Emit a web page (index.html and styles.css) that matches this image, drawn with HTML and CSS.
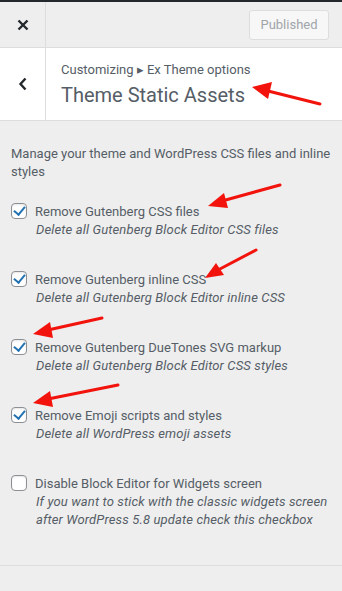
FILE: index.html
```html
<!DOCTYPE html>
<html lang="en">
<head>
  <meta charset="UTF-8">
  <meta name="viewport" content="width=device-width, initial-scale=1.0">
  <title>Theme Static Assets</title>
  <link rel="stylesheet" href="styles.css">
</head>
<body>
  <div id="header">
    <div class="close">
      <svg width="12" height="12" viewBox="0 0 12 12"><path d="M1.5 1.5 L10.5 10.5 M10.5 1.5 L1.5 10.5" stroke="#23282d" stroke-width="2.4" fill="none"/></svg>
    </div>
    <div class="spacer"></div>
    <button class="published" disabled>Published</button>
  </div>

  <div id="section-title">
    <div class="back">
      <svg width="10" height="14" viewBox="0 0 10 14"><path d="M7.5 1.5 L2.5 7 L7.5 12.5" stroke="#23282d" stroke-width="2.4" fill="none"/></svg>
    </div>
    <div class="titles">
      <div class="crumb">Customizing &#9656; Ex Theme options</div>
      <div class="title">Theme Static Assets</div>
    </div>
  </div>

  <div id="content">
    <p class="intro">Manage your theme and WordPress CSS files and inline styles</p>
    <ul class="options">
      <li>
        <div class="row"><span class="box checked"></span><span class="label">Remove Gutenberg CSS files</span></div>
        <div class="desc">Delete all Gutenberg Block Editor CSS files</div>
      </li>
      <li>
        <div class="row"><span class="box checked"></span><span class="label">Remove Gutenberg inline CSS</span></div>
        <div class="desc">Delete all Gutenberg Block Editor inline CSS</div>
      </li>
      <li>
        <div class="row"><span class="box checked"></span><span class="label">Remove Gutenberg DueTones SVG markup</span></div>
        <div class="desc">Delete all Gutenberg Block Editor CSS styles</div>
      </li>
      <li>
        <div class="row"><span class="box checked"></span><span class="label">Remove Emoji scripts and styles</span></div>
        <div class="desc">Delete all WordPress emoji assets</div>
      </li>
      <li>
        <div class="row"><span class="box"></span><span class="label">Disable Block Editor for Widgets screen</span></div>
        <div class="desc">If you want to stick with the classic widgets screen after WordPress 5.8 update check this checkbox</div>
      </li>
    </ul>
  </div>
  <div id="footer"></div>

  <svg class="arrows" width="342" height="591" viewBox="0 0 342 591">
    <g stroke="#f2140c" stroke-width="3" fill="#f2140c" stroke-linecap="round">
      <line x1="320" y1="102" x2="268" y2="89"/>
      <polygon points="252,85 272,80 268,97" stroke="none"/>
      <line x1="280" y1="183" x2="222" y2="199"/>
      <polygon points="208,204 224,191 228,206" stroke="none"/>
      <line x1="256" y1="248" x2="218" y2="268"/>
      <polygon points="205,276 216,261 224,273" stroke="none"/>
      <line x1="102" y1="316" x2="48" y2="328"/>
      <polygon points="33,332 50,320 53,336" stroke="none"/>
      <line x1="118" y1="383" x2="48" y2="397"/>
      <polygon points="33,401 50,389 53,405" stroke="none"/>
    </g>
  </svg>
</body>
</html>
```

FILE: styles.css
```css
body {
  margin: 0;
  width: 342px;
  height: 591px;
  overflow: hidden;
  background: #eeeeee;
  font-family: Roboto, "Liberation Sans", sans-serif;
  font-size: 13px;
  color: #555d66;
  position: relative;
  border-top: 2px solid #23282d;
  box-sizing: border-box;
}
#header {
  display: flex;
  align-items: center;
  height: 45px;
  background: #eeeeee;
  border-bottom: 1px solid #dddddd;
}
.close, .back {
  width: 45px;
  height: 100%;
  border-right: 1px solid #dddddd;
  display: flex;
  align-items: center;
  justify-content: center;
}
.spacer {
  flex: 1;
}
.published {
  margin-right: 13px;
  height: 30px;
  width: 80px;
  border: 1px solid #dddddd;
  border-radius: 3px;
  background: #f7f7f7;
  color: #a0a5aa;
  font-family: inherit;
  font-size: 13px;
  padding: 0;
}
#section-title {
  display: flex;
  height: 72px;
  background: #ffffff;
  border-bottom: 1px solid #dddddd;
}
.back {
  height: auto;
}
.titles {
  padding: 13px 0 0 15px;
}
.crumb {
  font-size: 13px;
  line-height: 18px;
}
.title {
  font-size: 20px;
  line-height: 28px;
  margin-top: 2px;
}
#content {
  padding: 24px 6px 0 11px;
  height: 445px;
  box-sizing: border-box;
  border-bottom: 1px solid #dddddd;
}
.intro {
  margin: 0 0 21px;
  line-height: 18px;
}
.options {
  list-style: none;
  margin: 0;
  padding: 0;
}
.options li {
  margin-bottom: 31px;
}
.row {
  display: flex;
  align-items: center;
  height: 18px;
}
.box {
  width: 16px;
  height: 16px;
  box-sizing: border-box;
  border: 1px solid #8c8f94;
  border-radius: 4px;
  background: #ffffff;
  margin-right: 8px;
  position: relative;
  box-shadow: inset 0 1px 2px rgba(0, 0, 0, 0.1);
}
.box.checked::after {
  content: "";
  position: absolute;
  left: 4px;
  top: 0px;
  width: 5px;
  height: 9px;
  border: solid #2271b1;
  border-width: 0 2.5px 2.5px 0;
  transform: rotate(40deg);
}
.label {
  color: #555d66;
}
.desc {
  font-style: italic;
  letter-spacing: 0.14px;
  margin: 1px 0 0 25px;
  line-height: 18px;
}
.arrows {
  position: absolute;
  top: 0;
  left: 0;
  pointer-events: none;
}
```
